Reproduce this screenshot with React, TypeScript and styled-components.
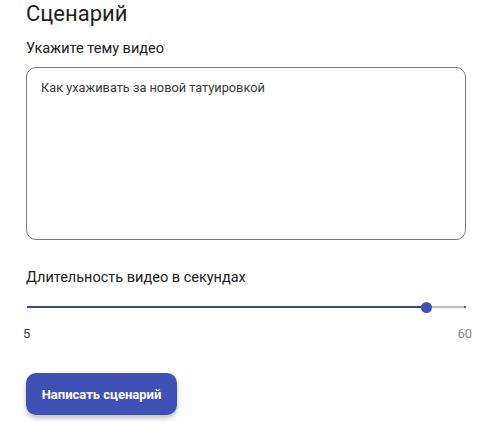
import React from 'react';
import styled, { createGlobalStyle } from 'styled-components';

const GlobalStyle = createGlobalStyle`
  html, body {
    margin: 0;
    padding: 0;
    background: #ffffff;
    font-family: Roboto, "Noto Sans", sans-serif;
    color: #212121;
  }
`;

const Page = styled.main`
  width: 493px;
  height: 422px;
  box-sizing: border-box;
  padding: 0 27px 0 26px;
  display: flex;
  flex-direction: column;
  overflow: hidden;
`;

const Title = styled.h2`
  margin: 1px 0 0;
  font-size: 22px;
  font-weight: 400;
  line-height: 26px;
`;

const Label = styled.label<{ $gap: number }>`
  display: block;
  margin-top: ${(p) => p.$gap}px;
  font-size: 14.5px;
  line-height: 18px;
  font-weight: 400;
  color: #212121;
`;

const TextArea = styled.textarea`
  margin-top: 9px;
  width: 100%;
  height: 173px;
  box-sizing: border-box;
  resize: none;
  border: 1px solid #7a7a7a;
  border-radius: 10px;
  padding: 12px 14px;
  font-family: Roboto, "Noto Sans", sans-serif;
  font-size: 12.75px;
  line-height: 16px;
  color: #3a3a3a;
  outline: none;
`;

const SliderWrap = styled.div`
  position: relative;
  margin-top: 13px;
  height: 14px;
`;

const Track = styled.div`
  position: absolute;
  left: 1px;
  right: 0;
  top: 6px;
  height: 2px;
  background: #b9bbd8;
`;

const Fill = styled.div`
  position: absolute;
  left: 0;
  top: 0;
  bottom: 0;
  background: #3a4597;
`;

const EndDot = styled.span`
  position: absolute;
  right: 0;
  top: 0;
  width: 2px;
  height: 2px;
  background: #555a80;
`;

const Thumb = styled.span`
  position: absolute;
  top: -4.5px;
  width: 11px;
  height: 11px;
  margin-left: -5.5px;
  border-radius: 50%;
  background: #3f51b5;
`;

const Scale = styled.div`
  display: flex;
  justify-content: space-between;
  margin: 12px -6px 0 -3px;
  font-size: 13px;
  line-height: 16px;
`;

const ScaleValue = styled.span<{ $muted?: boolean }>`
  color: ${(p) => (p.$muted ? '#8a8a8a' : '#3a3a3a')};
`;

const Button = styled.button`
  margin-top: 31px;
  align-self: flex-start;
  width: 151px;
  height: 42px;
  border: none;
  border-radius: 10px;
  background: #3f51b5;
  color: #ffffff;
  font-family: Roboto, "Noto Sans", sans-serif;
  font-size: 13px;
  font-weight: 700;
  box-shadow: 0 3px 5px rgba(0, 0, 0, 0.25);
  cursor: pointer;
`;

export default function App() {
  const min = 5;
  const max = 60;
  const value = 55;
  const pct = ((value - min) / (max - min)) * 100;

  return (
    <>
      <GlobalStyle />
      <Page>
        <Title>Сценарий</Title>
        <Label $gap={13}>Укажите тему видео</Label>
        <TextArea defaultValue="Как ухаживать за новой татуировкой" />
        <Label $gap={29}>Длительность видео в секундах</Label>
        <SliderWrap>
          <Track>
            <Fill style={{ width: `${pct}%` }} />
            <EndDot />
            <Thumb style={{ left: `${pct}%` }} />
          </Track>
        </SliderWrap>
        <Scale>
          <ScaleValue>{min}</ScaleValue>
          <ScaleValue $muted>{max}</ScaleValue>
        </Scale>
        <Button>Написать сценарий</Button>
      </Page>
    </>
  );
}
